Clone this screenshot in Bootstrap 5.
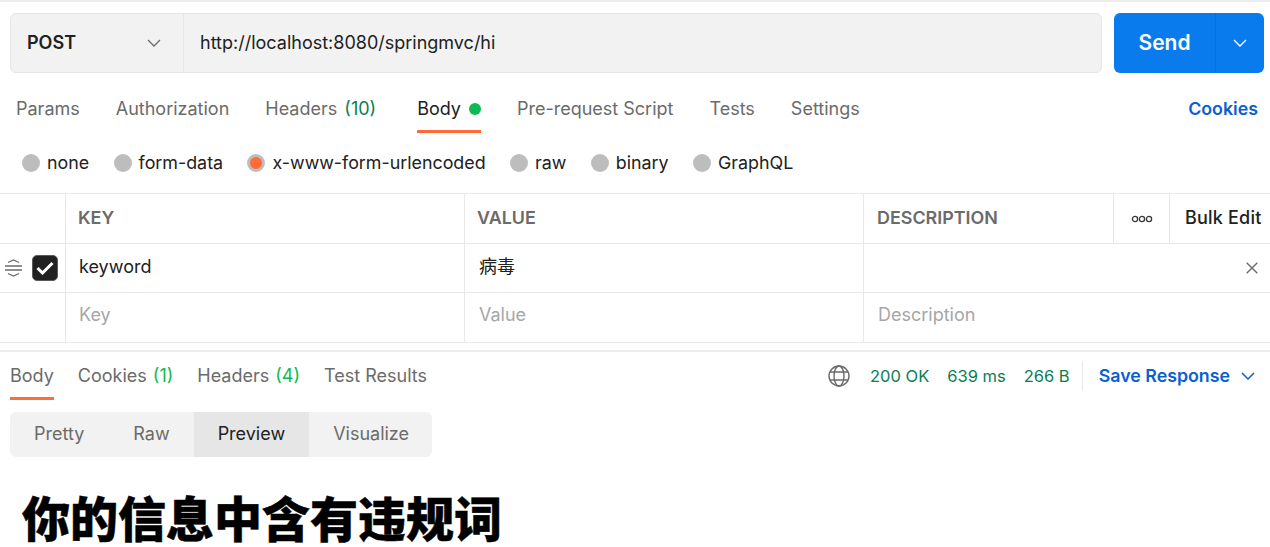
<!doctype html>
<html lang="zh">
<head>
<meta charset="utf-8">
<title>Postman</title>
<link href="https://cdn.jsdelivr.net/npm/bootstrap@5.3.0/dist/css/bootstrap.min.css" rel="stylesheet">
<style>
html,body{background:#fff;height:547px}
body{font-family:Inter,"Noto Sans CJK SC",sans-serif;font-size:18px;color:#212121;border-top:2px solid #ededed;line-height:24px}
.req-bar{padding:11px 6px 0 10px;height:71px;gap:12px}
.url-box{height:60px;background:#f2f2f2;border:1px solid #e6e6e6;border-radius:6px;min-width:0}
.method{width:173px;padding-left:16px;padding-right:22px;border-right:1px solid #e6e6e6;font-weight:600}
.url-text{padding-left:16px}
.send{width:150px;height:60px;background:#097bed;border-radius:6px;color:#fff}
.send-main{width:101px;font-size:21px;font-weight:600;padding-left:0}
.send-arrow{width:49px;border-left:1px solid #0a6fd6}
.tabs{height:60px;padding:0 12px 0 16px;gap:36px}
.tab-item{height:60px;color:#6b6b6b;position:relative;padding-top:12px}
.tab-gap{margin-right:5px}
.tab-active{color:#212121}
.tab-active::after{content:"";position:absolute;left:0;right:0;bottom:0;height:3px;background:#ff6c37}
.cnt{color:#0b7d52;margin-left:2px}
.dot{width:12px;height:12px;background:#0cbb52;border-radius:50%;margin-left:8px}
.link-blue{color:#0b5fd3;font-weight:600;font-size:17.8px}
.tab-link{padding-top:12px}
.radios{height:60px;padding-left:22px;gap:24.4px;font-size:17.85px}
.rad{width:18px;height:18px;border-radius:50%;background:#bdbdbd;margin-right:7px}
.rad-on{background:#ff6c37;border:3.5px solid #bdbdbd}
.kv{border-top:1px solid #e8e8e8;border-bottom:1px solid #e8e8e8}
.kv-row{height:49px;border-bottom:1px solid #e8e8e8}
.kv-row:first-child{height:50px}
.kv-row:last-child{border-bottom:0}
.c0{width:66px;border-right:1px solid #e8e8e8;height:100%}
.c1,.c2{width:399px;border-right:1px solid #e8e8e8;height:100%;padding-left:12px}
.c3{width:250px;border-right:1px solid #e8e8e8;height:100%;padding-left:13px}
.c3w{flex:1 1 0;height:100%;padding-left:14px;padding-right:12px}
.c4{width:56px;border-right:1px solid #e8e8e8;height:100%}
.c5{flex:1 1 0;height:100%;padding-left:15px;font-weight:500;white-space:nowrap;letter-spacing:.2px;padding-bottom:1px}
.hd{font-weight:600;color:#6b6b6b;padding-bottom:2px;font-size:17.9px}
.val{padding-left:13px;padding-bottom:2px}
.val2{padding-left:14px}
.ph{color:#a6a6a6;padding-bottom:6px}
.chk{width:26px;height:26px;background:#212121;border:1px solid #5a5a5a;border-radius:5px}
.ctl{padding-left:5px;gap:10px}
.divider{height:2px;background:#ededed;margin-top:7px}
.res-bar{height:48px;padding:0 15px 0 10px}
.res-tabs{gap:24px}
.res-tab{height:48px;color:#6b6b6b;position:relative}
.cnt2{color:#0cbb52;margin-left:1px}
.globe{margin-right:20px}
.save-arrow{margin-left:11px}
.status{color:#0b7d52;gap:18px;font-size:16.5px}
.sep{width:1px;height:30px;background:#e8e8e8;margin:0 16px 0 12px}
.seg{margin:12px 0 0 10px;width:422px;height:45px;background:#f2f2f2;border-radius:6px;overflow:hidden;color:#6b6b6b}
.seg-item{height:100%;padding:0 24px 2px}
.seg-item:first-child{padding-right:25px}
.seg-on{background:#e6e6e6;color:#212121}
h1.big{margin:34px 0 0 22px;font:900 48px/50px "Noto Sans CJK SC",sans-serif;color:#000;white-space:nowrap;-webkit-text-stroke:.5px #000}
</style>
</head>
<body>
<div class="req-bar d-flex">
  <div class="url-box d-flex flex-grow-1 align-items-center">
    <div class="method d-flex h-100 align-items-center justify-content-between"><span>POST</span>
      <svg width="14" height="8" viewBox="0 0 14 8" fill="none" stroke="#6b6b6b" stroke-width="1.3"><path d="M1 1l6 6 6-6"/></svg></div>
    <div class="url-text">http://localhost:8080/springmvc/hi</div>
  </div>
  <div class="send d-flex flex-shrink-0">
    <div class="send-main d-flex align-items-center justify-content-center">Send</div>
    <div class="send-arrow d-flex align-items-center justify-content-center">
      <svg width="14" height="8" viewBox="0 0 14 8" fill="none" stroke="#fff" stroke-width="1.4"><path d="M1 1l6 6 6-6"/></svg></div>
  </div>
</div>
<div class="tabs d-flex align-items-center">
  <div class="tab-item d-flex align-items-center">Params</div>
  <div class="tab-item d-flex align-items-center">Authorization</div>
  <div class="tab-item tab-gap d-flex align-items-center">Headers&nbsp;<span class="cnt">(10)</span></div>
  <div class="tab-item tab-active d-flex align-items-center">Body<span class="dot"></span></div>
  <div class="tab-item d-flex align-items-center">Pre-request Script</div>
  <div class="tab-item d-flex align-items-center">Tests</div>
  <div class="tab-item d-flex align-items-center">Settings</div>
  <div class="link-blue tab-link ms-auto">Cookies</div>
</div>
<div class="radios d-flex align-items-center">
  <div class="d-flex align-items-center"><span class="rad"></span>none</div>
  <div class="d-flex align-items-center"><span class="rad"></span>form-data</div>
  <div class="d-flex align-items-center"><span class="rad rad-on"></span>x-www-form-urlencoded</div>
  <div class="d-flex align-items-center"><span class="rad"></span>raw</div>
  <div class="d-flex align-items-center"><span class="rad"></span>binary</div>
  <div class="d-flex align-items-center"><span class="rad"></span>GraphQL</div>
</div>
<div class="kv">
  <div class="kv-row d-flex align-items-center">
    <div class="c0"></div><div class="c1 hd d-flex align-items-center">KEY</div><div class="c2 hd d-flex align-items-center">VALUE</div><div class="c3 hd d-flex align-items-center">DESCRIPTION</div>
    <div class="c4 d-flex align-items-center justify-content-center"><svg width="22" height="8" viewBox="0 0 22 8" fill="none" stroke="#3a3a3a" stroke-width="1.3"><circle cx="4" cy="4" r="2.6"/><circle cx="11" cy="4" r="2.6"/><circle cx="18" cy="4" r="2.6"/></svg></div>
    <div class="c5 d-flex align-items-center">Bulk Edit</div>
  </div>
  <div class="kv-row d-flex align-items-center">
    <div class="c0 ctl d-flex align-items-center">
      <svg width="17" height="18" viewBox="0 0 17 18" fill="none" stroke="#6b6b6b" stroke-width="1.3"><path d="M3 3.5L8.5 1 14 3.5M0 7h17M0 11h17M3 14.5L8.5 17 14 14.5"/></svg>
      <div class="chk d-flex align-items-center justify-content-center flex-shrink-0"><svg width="18" height="14" viewBox="0 0 18 14" fill="none" stroke="#fff" stroke-width="3"><path d="M1.5 7l5 5L16.5 2"/></svg></div>
    </div>
    <div class="c1 val d-flex align-items-center">keyword</div>
    <div class="c2 val val2 d-flex align-items-center">病毒</div>
    <div class="c3w d-flex align-items-center justify-content-end"><svg width="12" height="12" viewBox="0 0 12 12" fill="none" stroke="#6b6b6b" stroke-width="1.4"><path d="M.7.7l10.6 10.6M11.3.7L.7 11.3"/></svg></div>
  </div>
  <div class="kv-row d-flex align-items-center">
    <div class="c0"></div><div class="c1 val ph d-flex align-items-center">Key</div><div class="c2 val val2 ph d-flex align-items-center">Value</div><div class="c3w ph d-flex align-items-center">Description</div>
  </div>
</div>
<div class="divider"></div>
<div class="res-bar d-flex align-items-center">
  <div class="res-tabs d-flex">
    <div class="res-tab tab-active d-flex align-items-center">Body</div>
    <div class="res-tab d-flex align-items-center">Cookies&nbsp;<span class="cnt2">(1)</span></div>
    <div class="res-tab d-flex align-items-center">Headers&nbsp;<span class="cnt2">(4)</span></div>
    <div class="res-tab d-flex align-items-center">Test Results</div>
  </div>
  <div class="ms-auto d-flex align-items-center">
    <svg class="globe" width="22" height="22" viewBox="0 0 22 22" fill="none" stroke="#6b6b6b" stroke-width="1.4"><circle cx="11" cy="11" r="10"/><ellipse cx="11" cy="11" rx="5" ry="10"/><path d="M2 7h18M2 15h18"/></svg>
    <div class="status d-flex"><span>200&nbsp;OK</span><span>639 ms</span><span>266 B</span></div>
    <div class="sep"></div>
    <div class="link-blue">Save Response</div>
    <svg class="save-arrow" width="14" height="8" viewBox="0 0 14 8" fill="none" stroke="#0b5fd3" stroke-width="1.5"><path d="M1 1l6 6 6-6"/></svg>
  </div>
</div>
<div class="seg d-flex align-items-center">
  <div class="seg-item d-flex align-items-center">Pretty</div>
  <div class="seg-item d-flex align-items-center">Raw</div>
  <div class="seg-item seg-on d-flex align-items-center">Preview</div>
  <div class="seg-item d-flex align-items-center">Visualize</div>
</div>
<h1 class="big">你的信息中含有违规词</h1>
<script src="https://cdn.jsdelivr.net/npm/bootstrap@5.3.0/dist/js/bootstrap.bundle.min.js"></script>
</body>
</html>
